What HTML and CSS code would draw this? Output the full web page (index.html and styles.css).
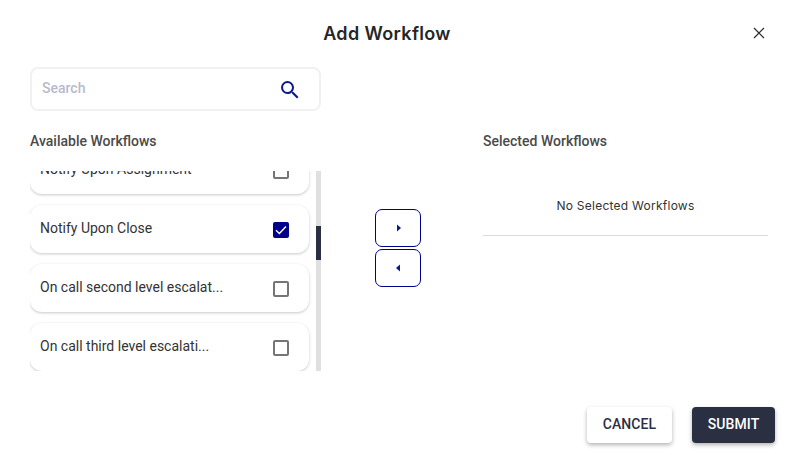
FILE: index.html
```html
<!DOCTYPE html>
<html lang="en">

<head>
    <meta charset="UTF-8">
    <meta name="viewport" content="width=device-width, initial-scale=1.0">
    <title>Add Workflow</title>
    <link rel="stylesheet" href="styles.css">
</head>

<body>

    <div class="dialog">
        <header class="top">
            <h1>Add Workflow</h1>
            <button class="close" aria-label="Close">
                <svg width="12" height="12" viewBox="0 0 12 12">
                    <path d="M1 1L11 11M11 1L1 11" stroke="#2b2b2b" stroke-width="1.2" fill="none" />
                </svg>
            </button>
        </header>

        <div class="columns">
            <section class="left">
                <div class="search">
                    <span class="placeholder">Search</span>
                    <svg width="24" height="24" viewBox="0 0 24 24">
                        <path fill="#0a1a8c"
                            d="M15.5 14h-.79l-.28-.27A6.47 6.47 0 0 0 16 9.5 6.5 6.5 0 1 0 9.5 16c1.61 0 3.09-.59 4.23-1.57l.27.28v.79l5 4.99L20.49 19l-4.99-5zm-6 0C7.01 14 5 11.99 5 9.5S7.01 5 9.5 5 14 7.01 14 9.5 11.99 14 9.5 14z" />
                    </svg>
                </div>

                <h2 class="heading">Available Workflows</h2>

                <div class="picker">
                    <div class="list">
                        <div class="card first">
                            <span>Notify Upon Assignment</span>
                            <i class="check"></i>
                        </div>
                        <div class="card">
                            <span>Notify Upon Close</span>
                            <i class="check on">
                                <svg width="16" height="16" viewBox="0 0 16 16">
                                    <path d="M3 8.2L6.4 11.4L13 4.6" stroke="#fff" stroke-width="1.4" fill="none" />
                                </svg>
                            </i>
                        </div>
                        <div class="card">
                            <span>On call second level escalat...</span>
                            <i class="check"></i>
                        </div>
                        <div class="card">
                            <span>On call third level escalati...</span>
                            <i class="check"></i>
                        </div>
                    </div>
                    <div class="track">
                        <div class="thumb"></div>
                    </div>
                </div>
            </section>

            <div class="arrows">
                <button class="arrow">
                    <svg width="6" height="8" viewBox="0 0 6 8">
                        <path d="M2 0.5L6 4L2 7.5Z" fill="#0a1a8c" />
                    </svg>
                </button>
                <button class="arrow">
                    <svg width="6" height="8" viewBox="0 0 6 8">
                        <path d="M5 0.5L1 4L5 7.5Z" fill="#0a1a8c" />
                    </svg>
                </button>
            </div>

            <section class="right">
                <h2 class="heading">Selected Workflows</h2>
                <p class="empty">No Selected Workflows</p>
            </section>
        </div>

        <footer class="actions">
            <button class="btn cancel">CANCEL</button>
            <button class="btn submit">SUBMIT</button>
        </footer>
    </div>

</body>

</html>
```

FILE: styles.css
```css
body {
    margin: 0;
    background: white;
    font-family: Roboto, "Liberation Sans", sans-serif;
    color: #333;
}

.dialog {
    width: 798px;
    height: 465px;
    box-sizing: border-box;
    padding: 0 23px 0 30px;
    overflow: hidden;
}

.top {
    height: 67px;
    display: flex;
    align-items: center;
    justify-content: center;
    position: relative;
}

.top h1 {
    margin: 0 31px 0 0;
    font-family: Inter, sans-serif;
    font-size: 18px;
    font-weight: 600;
    letter-spacing: 0.35px;
    color: #262626;
}

.close {
    position: absolute;
    right: 10px;
    top: 27px;
    width: 12px;
    height: 12px;
    padding: 0;
    border: 0;
    background: none;
    display: flex;
}

.columns {
    display: flex;
    height: 340px;
}

.left {
    width: 291px;
}

.search {
    width: 291px;
    height: 44px;
    box-sizing: border-box;
    border: 2px solid #f1f1f3;
    border-radius: 8px;
    padding: 0 17px 0 10px;
    display: flex;
    align-items: center;
    justify-content: space-between;
}

.search svg {
    margin-top: 2px;
}

.placeholder {
    font-size: 14px;
    color: #b9b9cc;
    font-weight: 500;
    margin-bottom: 3px;
}

.heading {
    margin: 0;
    font-size: 14px;
    line-height: 16px;
    font-weight: 500;
    color: #4a4a4a;
}

.left .heading {
    margin-top: 22px;
}

.picker {
    margin-top: 22px;
    height: 200px;
    display: flex;
    justify-content: space-between;
}

.list {
    width: 286px;
    overflow: hidden;
}

.card {
    width: 279px;
    height: 48px;
    box-sizing: border-box;
    margin-bottom: 11px;
    padding: 0 20px 0 10px;
    border-radius: 12px;
    background: white;
    box-shadow: 0 1px 3px rgba(0, 0, 0, 0.22);
    display: flex;
    align-items: center;
    justify-content: space-between;
    font-size: 14px;
    color: #333;
}

.card span {
    margin-bottom: 2px;
}

.card.first {
    margin-top: -25px;
}

.check {
    width: 16px;
    height: 16px;
    box-sizing: border-box;
    border: 2px solid #757575;
    border-radius: 2px;
    margin-top: 2px;
    display: block;
}

.check.on {
    border: 0;
    background: #00008b;
}

.check.on svg {
    display: block;
}

.track {
    width: 5px;
    height: 200px;
    background: #e0e0e0;
    padding-top: 55px;
    box-sizing: border-box;
}

.thumb {
    height: 34px;
    background: #2b2f42;
}

.arrows {
    width: 46px;
    margin: 142px 62px 0 54px;
    display: flex;
    flex-direction: column;
    gap: 2px;
}

.arrow {
    width: 46px;
    height: 38px;
    padding: 0;
    background: white;
    border: 1px solid #00008b;
    border-radius: 7px;
    display: flex;
    align-items: center;
    justify-content: center;
}

.right {
    width: 285px;
    padding-top: 66px;
}

.empty {
    margin: 0;
    margin-top: 39px;
    height: 48px;
    box-sizing: border-box;
    padding-top: 10px;
    border-bottom: 1px solid #dcdcdc;
    text-align: center;
    font-family: Inter, sans-serif;
    font-size: 12px;
    font-weight: 400;
    letter-spacing: 0.25px;
    line-height: 16px;
    color: #333;
}

.right .heading {
    margin-top: 0;
}

.actions {
    display: flex;
    justify-content: flex-end;
    gap: 20px;
    margin-top: 0;
}

.btn {
    height: 36px;
    border: 0;
    border-radius: 4px;
    font-family: Roboto, sans-serif;
    font-size: 14px;
    font-weight: 500;
    letter-spacing: 0.1px;
    padding: 0 0 2px;
    box-shadow: 0 2px 4px rgba(0, 0, 0, 0.3);
}

.cancel {
    width: 85px;
    background: white;
    color: #2b2f42;
}

.submit {
    width: 83px;
    background: #2b2f42;
    color: white;
}
```
